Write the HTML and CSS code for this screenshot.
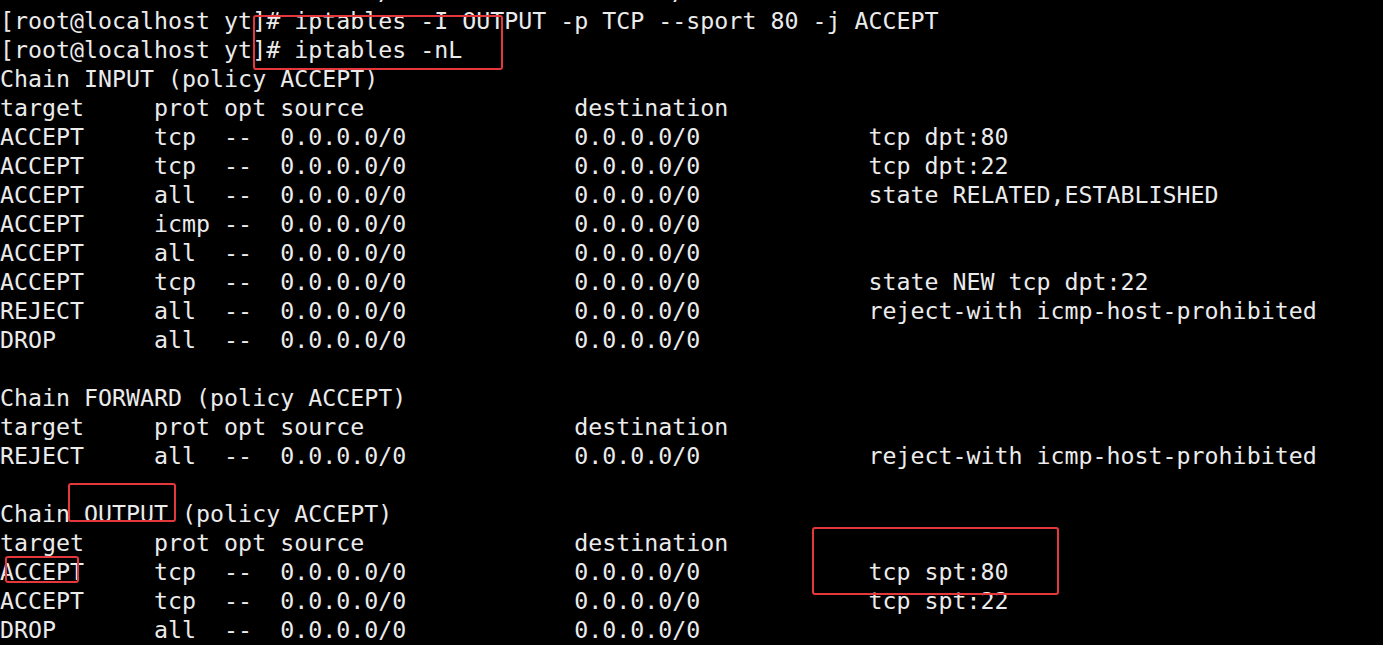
FILE: index.html
```html
<!DOCTYPE html>
<html>
<head>
<meta charset="utf-8">
<link rel="stylesheet" href="styles.css">
</head>
<body>
<div class="term">
<pre class="out">DROP       all  --  0.0.0.0/0            0.0.0.0/0
[root@localhost yt]# iptables -I OUTPUT -p TCP --sport 80 -j ACCEPT
[root@localhost yt]# iptables -nL
Chain INPUT (policy ACCEPT)
target     prot opt source               destination
ACCEPT     tcp  --  0.0.0.0/0            0.0.0.0/0            tcp dpt:80
ACCEPT     tcp  --  0.0.0.0/0            0.0.0.0/0            tcp dpt:22
ACCEPT     all  --  0.0.0.0/0            0.0.0.0/0            state RELATED,ESTABLISHED
ACCEPT     icmp --  0.0.0.0/0            0.0.0.0/0
ACCEPT     all  --  0.0.0.0/0            0.0.0.0/0
ACCEPT     tcp  --  0.0.0.0/0            0.0.0.0/0            state NEW tcp dpt:22
REJECT     all  --  0.0.0.0/0            0.0.0.0/0            reject-with icmp-host-prohibited
DROP       all  --  0.0.0.0/0            0.0.0.0/0

Chain FORWARD (policy ACCEPT)
target     prot opt source               destination
REJECT     all  --  0.0.0.0/0            0.0.0.0/0            reject-with icmp-host-prohibited

Chain OUTPUT (policy ACCEPT)
target     prot opt source               destination
ACCEPT     tcp  --  0.0.0.0/0            0.0.0.0/0            tcp spt:80
ACCEPT     tcp  --  0.0.0.0/0            0.0.0.0/0            tcp spt:22
DROP       all  --  0.0.0.0/0            0.0.0.0/0</pre>
<div class="mark m-cmd"></div>
<div class="mark m-chain"></div>
<div class="mark m-target"></div>
<div class="mark m-spt"></div>
</div>
</body>
</html>
```
FILE: styles.css
```css
html, body {
  margin: 0;
  padding: 0;
  background: #000;
  width: 1383px;
  height: 645px;
  overflow: hidden;
}
.term {
  position: relative;
  display: flow-root;
  width: 1383px;
  height: 645px;
  overflow: hidden;
}
.out {
  margin: -22.6px 0 0 0;
  padding: 0;
  font-family: "DejaVu Sans Mono", monospace;
  font-size: 23.27px;
  line-height: 29px;
  color: #ebebeb;
  white-space: pre;
}
.mark {
  position: absolute;
  border: 2px solid #e5383c;
  border-radius: 3px;
  box-sizing: border-box;
}
.m-cmd { left: 253px; top: 15px; width: 250px; height: 55px; }
.m-chain { left: 68px; top: 483px; width: 108px; height: 39px; }
.m-target { left: 5px; top: 556px; width: 74px; height: 27px; }
.m-spt { left: 812px; top: 527px; width: 247px; height: 68px; }
```
